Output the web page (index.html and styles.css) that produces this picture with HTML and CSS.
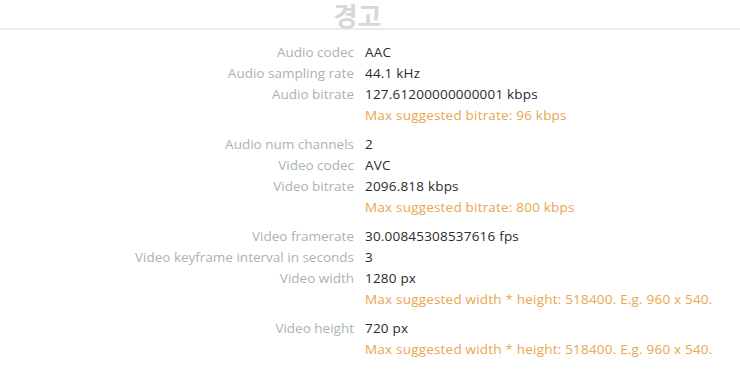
FILE: index.html
```html
<!DOCTYPE html>
<html lang="ko">
<head>
<meta charset="utf-8">
<link rel="stylesheet" href="styles.css">
</head>
<body>
<header class="head"><h1 class="title">경고</h1></header>
<dl class="list">
  <div class="row"><dt>Audio codec</dt><dd>AAC</dd></div>
  <div class="row"><dt>Audio sampling rate</dt><dd>44.1 kHz</dd></div>
  <div class="row warn"><dt>Audio bitrate</dt><dd>127.61200000000001 kbps<span class="note">Max suggested bitrate: 96 kbps</span></dd></div>
  <div class="row"><dt>Audio num channels</dt><dd>2</dd></div>
  <div class="row"><dt>Video codec</dt><dd>AVC</dd></div>
  <div class="row warn"><dt>Video bitrate</dt><dd>2096.818 kbps<span class="note">Max suggested bitrate: 800 kbps</span></dd></div>
  <div class="row"><dt>Video framerate</dt><dd>30.00845308537616 fps</dd></div>
  <div class="row"><dt>Video keyframe interval in seconds</dt><dd>3</dd></div>
  <div class="row warn"><dt>Video width</dt><dd>1280 px<span class="note">Max suggested width * height: 518400. E.g. 960 x 540.</span></dd></div>
  <div class="row warn"><dt>Video height</dt><dd>720 px<span class="note">Max suggested width * height: 518400. E.g. 960 x 540.</span></dd></div>
</dl>
</body>
</html>
```
FILE: styles.css
```css
html, body {
  margin: 0;
  padding: 0;
  background: #fff;
}
body {
  font-family: "Open Sans", "Noto Sans CJK KR", sans-serif;
  font-size: 13.5px;
  color: #333;
}
.head {
  border-bottom: 2px solid #ececec;
  text-align: center;
  padding: 1px 25px 0 0;
}
.title {
  margin: 0;
  font-family: "Noto Sans CJK KR", sans-serif;
  font-size: 26px;
  font-weight: 700;
  line-height: 27px;
  color: #d2d8db;
}
.list {
  margin: 12px 0 0;
  padding: 0;
}
.row {
  display: grid;
  grid-template-columns: 354px 1fr;
  column-gap: 11px;
  line-height: 21px;
}
.row.warn {
  margin-bottom: 8px;
}
.row dt {
  text-align: right;
  color: #a9b3b7;
}
.row dd {
  margin: 0;
  color: #2b2b2b;
  letter-spacing: 0.2px;
}
.note {
  display: block;
  color: #eaa64e;
}
```
